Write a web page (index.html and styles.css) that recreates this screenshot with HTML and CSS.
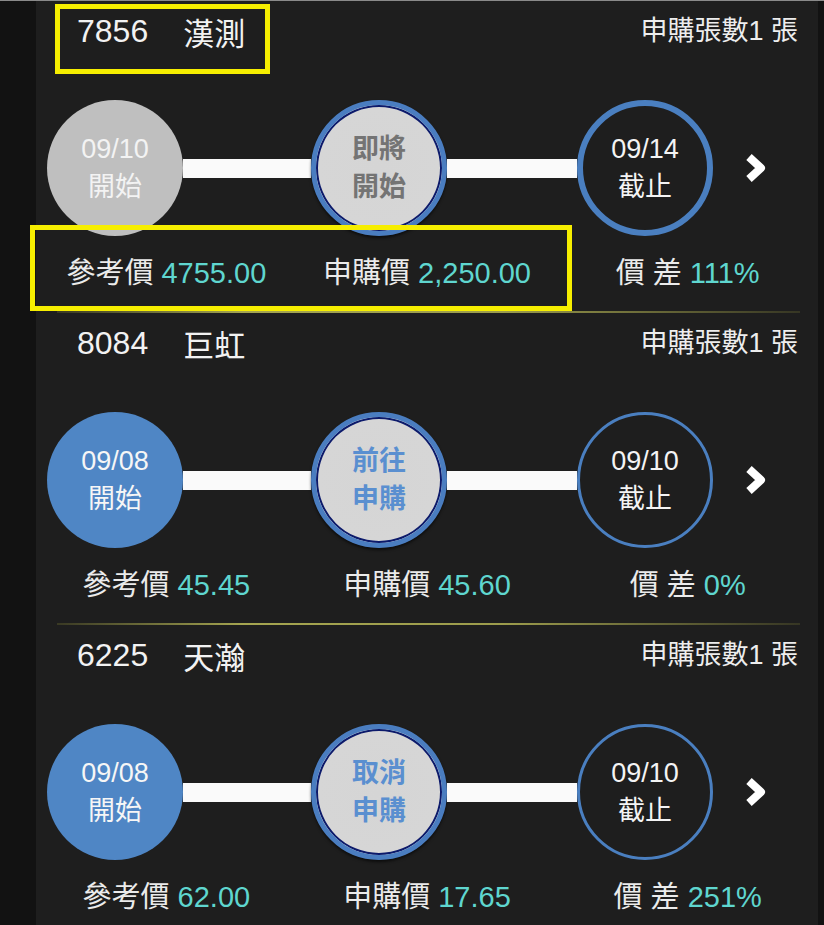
FILE: index.html
```html
<!DOCTYPE html>
<html lang="zh-Hant">
<head>
<meta charset="utf-8">
<title>申購</title>
<link rel="stylesheet" href="styles.css">
</head>
<body>
<div class="frame">
  <main class="panel">
    <section class="card">
      <div class="head"><span class="code">7856</span><span class="name">漢測</span><span class="qty">申購張數1 張</span></div>
      <div class="track">
        <div class="dot dot-gray"><span>09/10</span><span>開始</span></div>
        <div class="bar bar-a"></div>
        <div class="dot dot-mid"><span class="mid-text mid-gray">即將</span><span class="mid-text mid-gray">開始</span></div>
        <div class="bar bar-b"></div>
        <div class="dot dot-end dot-end-thick"><span>09/14</span><span>截止</span></div>
        <svg class="chev" viewBox="0 0 26 32" width="26" height="32"><path d="M6 5 L18 16 L6 27" /></svg>
      </div>
      <div class="prices">
        <div>參考價 <span class="val">4755.00</span></div>
        <div>申購價 <span class="val">2,250.00</span></div>
        <div>價 差 <span class="val">111%</span></div>
      </div>
      <div class="sep"></div>
      <div class="mark mark-title"></div>
      <div class="mark mark-price"></div>
    </section>

    <section class="card">
      <div class="head"><span class="code">8084</span><span class="name">巨虹</span><span class="qty">申購張數1 張</span></div>
      <div class="track">
        <div class="dot dot-blue"><span>09/08</span><span>開始</span></div>
        <div class="bar bar-a"></div>
        <div class="dot dot-mid"><span class="mid-text">前往</span><span class="mid-text">申購</span></div>
        <div class="bar bar-b"></div>
        <div class="dot dot-end"><span>09/10</span><span>截止</span></div>
        <svg class="chev" viewBox="0 0 26 32" width="26" height="32"><path d="M6 5 L18 16 L6 27" /></svg>
      </div>
      <div class="prices">
        <div>參考價 <span class="val">45.45</span></div>
        <div>申購價 <span class="val">45.60</span></div>
        <div>價 差 <span class="val">0%</span></div>
      </div>
      <div class="sep"></div>
    </section>

    <section class="card">
      <div class="head"><span class="code">6225</span><span class="name">天瀚</span><span class="qty">申購張數1 張</span></div>
      <div class="track">
        <div class="dot dot-blue"><span>09/08</span><span>開始</span></div>
        <div class="bar bar-a"></div>
        <div class="dot dot-mid"><span class="mid-text">取消</span><span class="mid-text">申購</span></div>
        <div class="bar bar-b"></div>
        <div class="dot dot-end"><span>09/10</span><span>截止</span></div>
        <svg class="chev" viewBox="0 0 26 32" width="26" height="32"><path d="M6 5 L18 16 L6 27" /></svg>
      </div>
      <div class="prices">
        <div>參考價 <span class="val">62.00</span></div>
        <div>申購價 <span class="val">17.65</span></div>
        <div>價 差 <span class="val">251%</span></div>
      </div>
    </section>
  </main>
</div>
</body>
</html>
```

FILE: styles.css
```css
html, body {
  margin: 0;
  padding: 0;
}

body {
  background: #121212;
  font-family: "Liberation Sans", "Noto Sans CJK TC", sans-serif;
  color: #ececec;
  height: 925px;
  overflow: hidden;
}

.frame {
  display: flex;
  border-top: 1px solid #8a8a8a;
  padding-left: 36px;
  padding-right: 6px;
  height: 924px;
}

.panel {
  flex: 1;
  background: #1e1e1e;
  position: relative;
}

.card {
  position: relative;
}

.head {
  display: flex;
  align-items: center;
  height: 60px;
  padding: 0 20px 0 41px;
}

.code {
  font-size: 32px;
  color: #f2f2f2;
}

.name {
  font-size: 31px;
  margin-left: 35px;
  color: #f2f2f2;
  font-family: "Noto Sans CJK TC", sans-serif;
  line-height: 1;
}

.qty {
  margin-left: auto;
  font-size: 27px;
  color: #ededed;
  line-height: 1;
}

.track {
  display: flex;
  align-items: center;
  height: 136px;
  margin-top: 39px;
  padding-left: 11px;
}

.dot {
  width: 136px;
  height: 136px;
  flex: none;
  box-sizing: border-box;
  border-radius: 50%;
  display: flex;
  flex-direction: column;
  align-items: center;
  justify-content: center;
  font-size: 27px;
  line-height: 38px;
  color: #f4f4f4;
}

.dot-gray {
  background: #bfbfbf;
  color: #f3f3f3;
}

.dot-blue {
  background: #4f86c5;
  color: #f6f6f6;
}

.dot-mid {
  border: 5px solid #4a7dc0;
  background: radial-gradient(circle, #d5d5d5 0%, #d6d6d6 70%, #e8e8e8 86%, #ffffff 97%);
  box-shadow: inset 0 0 0 2px #0c1a6b, 0 2px 3px rgba(0, 0, 0, 0.6);
}

.mid-text {
  font-weight: bold;
  color: #5a8fd0;
}

.mid-gray {
  color: #747474;
}

.dot-end {
  border: 3px solid #4a7fc0;
  background: transparent;
}

.dot-end-thick {
  border-width: 6px;
}

.bar {
  height: 19px;
  background: #fafafa;
  flex: none;
}

.bar-a {
  width: 128px;
}

.bar-b {
  width: 130px;
}

.chev {
  margin-left: 30px;
  flex: none;
}

.chev path {
  fill: none;
  stroke: #ffffff;
  stroke-width: 8;
  stroke-linejoin: round;
  stroke-linecap: butt;
}

.prices {
  display: grid;
  grid-template-columns: 1fr 1fr 1fr;
  height: 75px;
  align-items: center;
  text-align: center;
  font-size: 29px;
  line-height: 1;
  color: #ebebeb;
}

.val {
  color: #5fd6cf;
}

.sep {
  height: 2px;
  margin: 0 18px 0 21px;
  background: linear-gradient(to right, rgba(120, 120, 50, 0.3), #a5a550 25%, #9c9c4c 60%, rgba(90, 90, 45, 0.4));
}

.mark {
  position: absolute;
  border: 5px solid #f6ee00;
  box-sizing: border-box;
  pointer-events: none;
}

.mark-title {
  left: 19px;
  top: 3px;
  width: 215px;
  height: 70px;
}

.mark-price {
  left: -6px;
  top: 224px;
  width: 542px;
  height: 86px;
}
```
